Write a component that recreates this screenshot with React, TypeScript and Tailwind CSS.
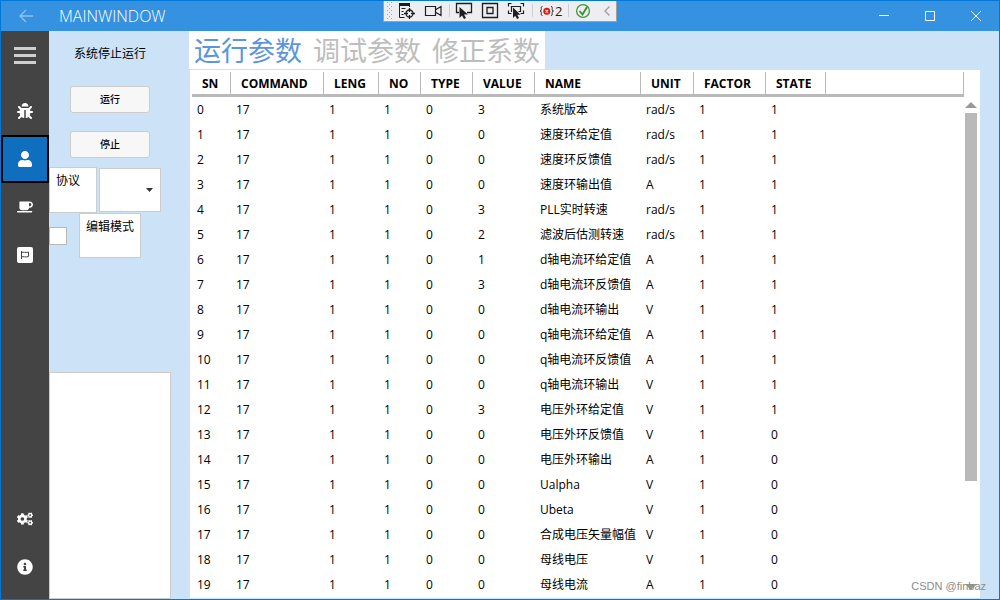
import { useState } from 'react';
import { FaBug, FaCoffee, FaCogs, FaInfoCircle, FaUser } from 'react-icons/fa';

const columns = [
  { title: 'SN', width: 'w-[39px]' },
  { title: 'COMMAND', width: 'w-[93px]' },
  { title: 'LENG', width: 'w-[55px]' },
  { title: 'NO', width: 'w-[42px]' },
  { title: 'TYPE', width: 'w-[52px]' },
  { title: 'VALUE', width: 'w-[62px]' },
  { title: 'NAME', width: 'w-[106px]' },
  { title: 'UNIT', width: 'w-[53px]' },
  { title: 'FACTOR', width: 'w-[72px]' },
  { title: 'STATE', width: 'w-[60px]' },
];

interface Param {
  value: number;
  name: string;
  unit: string;
  state: number;
}

const params: Param[] = [
  { value: 3, name: '系统版本', unit: 'rad/s', state: 1 },
  { value: 0, name: '速度环给定值', unit: 'rad/s', state: 1 },
  { value: 0, name: '速度环反馈值', unit: 'rad/s', state: 1 },
  { value: 0, name: '速度环输出值', unit: 'A', state: 1 },
  { value: 3, name: 'PLL实时转速', unit: 'rad/s', state: 1 },
  { value: 2, name: '滤波后估测转速', unit: 'rad/s', state: 1 },
  { value: 1, name: 'd轴电流环给定值', unit: 'A', state: 1 },
  { value: 3, name: 'd轴电流环反馈值', unit: 'A', state: 1 },
  { value: 0, name: 'd轴电流环输出', unit: 'V', state: 1 },
  { value: 0, name: 'q轴电流环给定值', unit: 'A', state: 1 },
  { value: 0, name: 'q轴电流环反馈值', unit: 'A', state: 1 },
  { value: 0, name: 'q轴电流环输出', unit: 'V', state: 1 },
  { value: 3, name: '电压外环给定值', unit: 'V', state: 1 },
  { value: 0, name: '电压外环反馈值', unit: 'V', state: 0 },
  { value: 0, name: '电压外环输出', unit: 'A', state: 0 },
  { value: 0, name: 'Ualpha', unit: 'V', state: 0 },
  { value: 0, name: 'Ubeta', unit: 'V', state: 0 },
  { value: 0, name: '合成电压矢量幅值', unit: 'V', state: 0 },
  { value: 0, name: '母线电压', unit: 'V', state: 0 },
  { value: 0, name: '母线电流', unit: 'A', state: 0 },
];

const tabs = ['运行参数', '调试参数', '修正系数'];

function FlagSquare({ size }: { size: number }) {
  return (
    <svg width={size} height={size} viewBox="0 0 16 16">
      <rect width="16" height="16" rx="2" fill="currentColor" />
      <path
        d="M4.500 4v8M4.500 5.500c2-1 3.500.7 7-.5v4.500c-3.500 1.200-5-.5-7 .5"
        fill="none"
        stroke="#444444"
      />
    </svg>
  );
}

const mainNav = [
  { label: 'Bugs', Icon: FaBug },
  { label: 'User', Icon: FaUser },
  { label: 'Break', Icon: FaCoffee },
  { label: 'Awesome', Icon: FlagSquare },
];

const optionNav = [
  { label: 'Settings', Icon: FaCogs },
  { label: 'About', Icon: FaInfoCircle },
];

function TitleBar() {
  return (
    <header className="flex h-[30px] shrink-0 items-center bg-[#3492e0] text-white">
      <button aria-label="Back" className="flex w-[50px] justify-center text-[#8fc2ee]">
        <svg width="14" height="14" viewBox="0 0 14 14" fill="none" stroke="currentColor" strokeWidth="1.300">
          <path d="M14 7H1M7 1L1 7l6 6" />
        </svg>
      </button>
      <h1 className="ml-2 flex-1 text-base leading-5 font-light">MAINWINDOW</h1>
      <button aria-label="Minimize" className="flex w-[46px] justify-center">
        <svg width="10" height="10" viewBox="0 0 10 10" stroke="currentColor">
          <path d="M0 4.500h10" />
        </svg>
      </button>
      <button aria-label="Maximize" className="flex w-[46px] justify-center">
        <svg width="10" height="10" viewBox="0 0 10 10" fill="none" stroke="currentColor">
          <path d="M.5.5h9v9h-9z" />
        </svg>
      </button>
      <button aria-label="Close" className="flex w-[46px] justify-center">
        <svg width="10" height="10" viewBox="0 0 10 10" stroke="currentColor">
          <path d="M0 0l10 10M10 0L0 10" />
        </svg>
      </button>
    </header>
  );
}

function DebugToolbar() {
  return (
    <div className="absolute top-0 left-[382px] flex h-[21px] w-[234px] border border-t-0 border-[#a0a0a0] bg-[#eeeef2] text-[#1e1e1e]">
      <svg width="232" height="20" viewBox="0 0 232 20" fill="none" stroke="currentColor" aria-hidden="true">
        <g stroke="#a5a5ad" strokeDasharray="1 3">
          <path d="M3.500 1v17M7.500 1v17" />
          <path d="M5.500 3v15" />
        </g>
        {/* live visual tree */}
        <path d="M15 3.500h11" strokeWidth="3" />
        <path d="M15.500 3v13.500h5M25.500 4v2M17.500 7.500h4M17.500 10.500h2M17.500 13.500h2" />
        <circle cx="25.500" cy="12.500" r="3.500" strokeWidth="1.300" />
        <path d="M25.500 7v4M25.500 14v4M20 12.500h4M27 12.500h4" strokeWidth="1.300" />
        {/* camera */}
        <path d="M41.500 5.500h10v9h-10zM52 8.500l5-3v9l-5-3" strokeWidth="1.200" />
        {/* select element */}
        <path d="M75 11.500h-2.500v-9h15v9H83" strokeWidth="1.300" />
        <path d="M75.500 6v11l2.500-2.500 2 3.500 2-1-2-3.500h4z" fill="currentColor" stroke="none" />
        {/* layout adorners */}
        <path d="M98.500 2.500h15v14h-15zM103 6.500h6v6h-6z" strokeWidth="1.300" />
        {/* track focus */}
        <path d="M124.500 5.500v-3h3M136.500 2.500h3v3M139.500 9.500v3h-3M127.500 12.500h-3v-3M128 10.500h-.5v-5h9v5h-2" strokeWidth="1.200" />
        <path d="M129 6.500v10.500l2.300-2.300 1.700 3.300 2-1-1.700-3.300h3.200z" fill="currentColor" stroke="none" />
        <path d="M65.500 3v13M148.500 3v13M184.500 3v13" stroke="#cccedb" />
        {/* binding failures */}
        <path
          d="M158.500 5.500c-2 0-1 2-1.200 3.200-.1.800-.5 1.300-1.300 1.300.8 0 1.200.5 1.300 1.300.2 1.200-.8 3.200 1.200 3.200M167 5.500c2 0 1 2 1.200 3.200.1.800.5 1.300 1.300 1.300-.8 0-1.200.5-1.300 1.300-.2 1.200.8 3.200-1.200 3.200"
          strokeWidth=".9"
        />
        <circle cx="162.800" cy="10.300" r="3.500" fill="#e51400" stroke="none" />
        <path d="M161.500 9l2.600 2.600M164.100 9l-2.600 2.600" stroke="#fff" strokeWidth="1.100" />
        <text x="171" y="15" fontSize="13" fill="currentColor" stroke="none">2</text>
        <circle cx="199" cy="10" r="6.400" stroke="#3c9a3c" strokeWidth="1.300" />
        <path d="M195.500 10l3 3.500 4.500-7.500" stroke="#2f912f" strokeWidth="1.800" />
        <path d="M225.500 5.500l-4.500 4.500 4.500 4.500" stroke="#a0a0a4" strokeWidth="1.400" />
      </svg>
    </div>
  );
}

function SideNav() {
  const [active, setActive] = useState('User');

  return (
    <nav className="flex w-12 shrink-0 flex-col bg-[#444444] pb-2 text-white">
      <button aria-label="Menu" className="mb-2 flex h-12 flex-col items-center justify-center gap-1">
        <span className="h-[3px] w-[22px] bg-[#cfcfcf]" />
        <span className="h-[3px] w-[22px] bg-[#cfcfcf]" />
        <span className="h-[3px] w-[22px] bg-[#cfcfcf]" />
      </button>
      {mainNav.map(({ label, Icon }) => (
        <button
          key={label}
          aria-label={label}
          onClick={() => setActive(label)}
          className={
            label === active
              ? 'flex h-12 items-center justify-center border-2 border-black bg-[#106ebe]'
              : 'flex h-12 items-center justify-center'
          }
        >
          <Icon size={16} />
        </button>
      ))}
      <div className="flex-1" />
      {optionNav.map(({ label, Icon }) => (
        <button key={label} aria-label={label} className="flex h-12 items-center justify-center">
          <Icon size={16} />
        </button>
      ))}
    </nav>
  );
}

function ControlPanel() {
  return (
    <aside className="flex w-[122px] shrink-0 flex-col">
      <p className="mt-[14px] text-center leading-[18px]">系统停止运行</p>
      <div className="mt-[23px] flex flex-col items-center gap-[18px]">
        <button className="h-[27px] w-20 rounded-[3px] border border-[#cccccc] bg-[#f7f7f7] text-[10px] font-medium">
          运行
        </button>
        <button className="h-[27px] w-20 rounded-[3px] border border-[#cccccc] bg-[#f7f7f7] text-[10px] font-medium">
          停止
        </button>
      </div>
      <div className="mt-[9px] flex items-center gap-[2px]">
        <label htmlFor="protocol" className="h-[46px] w-12 border border-[#cccccc] bg-white px-[6px] pt-1 leading-[18px]">
          协议
        </label>
        <div className="relative">
          <select
            id="protocol"
            className="block h-11 w-[62px] appearance-none border border-[#cccccc] bg-white px-2"
          />
          <svg className="pointer-events-none absolute top-5 right-2" width="7" height="4" viewBox="0 0 7 4">
            <path d="M0 0h7L3.500 4z" fill="#333333" />
          </svg>
        </div>
      </div>
      <div className="flex items-center gap-3">
        <input
          id="edit-mode"
          type="checkbox"
          className="size-[18px] appearance-none border border-[#b9b9b9] bg-white checked:bg-[#106ebe]"
        />
        <label htmlFor="edit-mode" className="h-[45px] w-[62px] border border-[#cccccc] bg-white px-[6px] pt-1 leading-[18px]">
          编辑模式
        </label>
      </div>
      <div className="mt-[114px] flex-1 border border-[#cccccc] bg-white" />
    </aside>
  );
}

function ParamTable() {
  return (
    <table className="w-full table-fixed border-separate border-spacing-0 text-left">
      <thead>
        <tr>
          {columns.map(({ title, width }) => (
            <th key={title} className={`${width} border-b-[3px] border-[#b9b9b9] p-0 pt-[2px] font-bold`}>
              <div className="h-[22px] border-r border-[#b9b9b9] pl-[10px] leading-6">{title}</div>
            </th>
          ))}
          <th aria-hidden="true" className="border-b-[3px] border-[#b9b9b9] p-0 pt-[2px]">
            <div className="h-[22px] border-r border-[#b9b9b9]" />
          </th>
        </tr>
      </thead>
      <tbody>
        {params.map(({ value, name, unit, state }, sn) => (
          <tr key={name}>
            {[sn, 17, 1, 1, 0, value, name, unit, 1, state].map((cell, i) => (
              <td key={columns[i].title} className="h-[25px] p-0 pl-[5px] leading-[25px] whitespace-nowrap">
                {cell}
              </td>
            ))}
            <td className="p-0" />
          </tr>
        ))}
      </tbody>
    </table>
  );
}

function ScrollBar() {
  return (
    <div className="mt-8 mr-[3px] mb-2 ml-px flex w-3 shrink-0 flex-col">
      <svg width="12" height="6" viewBox="0 0 12 6">
        <path d="M6 0l6 6H0z" fill="#999999" />
      </svg>
      <div className="my-[5px] flex-1">
        <div className="h-[79%] bg-[#b9b9b9]" />
      </div>
      <svg width="12" height="6" viewBox="0 0 12 6">
        <path d="M0 0h12L6 6z" fill="#999999" />
      </svg>
    </div>
  );
}

export default function App() {
  const [tab, setTab] = useState(tabs[0]);

  return (
    <div className="relative flex h-screen flex-col overflow-hidden border border-[#0078d7] bg-[#cce3f7] font-['Open_Sans','Noto_Sans_CJK_SC',sans-serif] text-xs text-black">
      <TitleBar />
      <div className="flex min-h-0 flex-1">
        <SideNav />
        <ControlPanel />
        <main className="mr-[19px] ml-[18px] flex min-w-0 flex-1 flex-col">
          <div role="tablist" className="flex h-[38px] shrink-0 gap-[11px] self-start bg-white px-[5px]">
            {tabs.map((name) => (
              <button
                key={name}
                role="tab"
                aria-selected={name === tab}
                onClick={() => setTab(name)}
                className={
                  name === tab
                    ? 'text-[27px] leading-10 text-[#5b95dc]'
                    : 'text-[27px] leading-10 text-[#bdbdbd]'
                }
              >
                {name}
              </button>
            ))}
          </div>
          <section className="mt-px mb-px ml-px flex min-h-0 flex-1 overflow-hidden bg-white">
            <div className="min-w-0 flex-1 pl-[2px]">
              <ParamTable />
            </div>
            <ScrollBar />
          </section>
        </main>
      </div>
      <DebugToolbar />
      <span className="absolute right-[13px] bottom-[5px] font-['Liberation_Sans',sans-serif] text-[11px] leading-4 text-[#8c8c8c]">
        CSDN @finbaz
      </span>
    </div>
  );
}
